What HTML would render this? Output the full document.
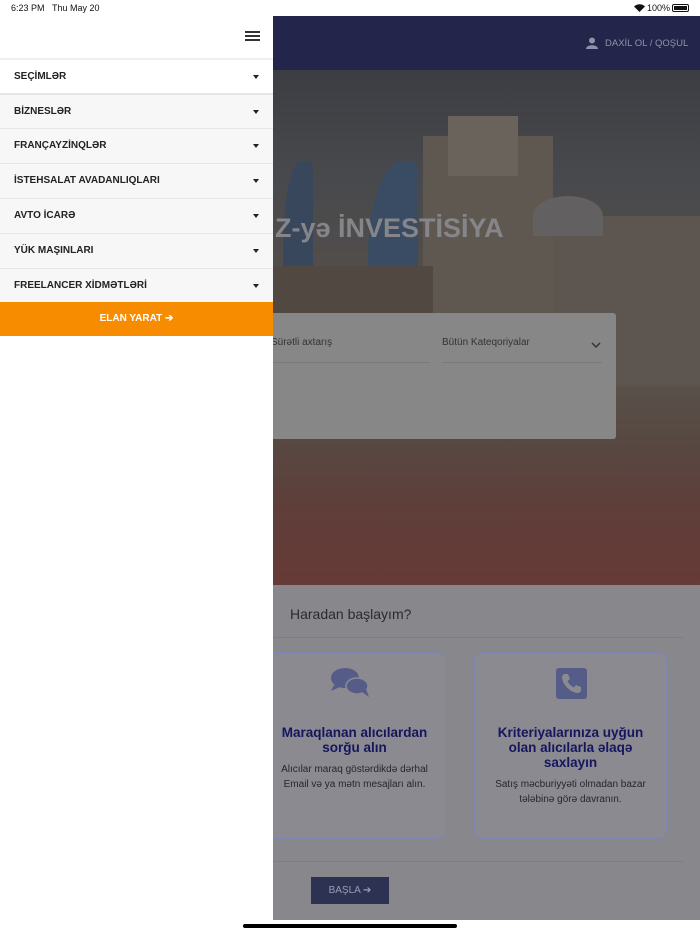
<!DOCTYPE html>
<html><head><meta charset="utf-8"><style>
*{margin:0;padding:0;box-sizing:border-box}
body{width:700px;height:934px;overflow:hidden;background:#fff;font-family:"Liberation Sans",Arial,sans-serif;position:relative}
.abs{position:absolute}
.status{left:0;top:0;width:700px;height:16px;background:#fff;font-size:9px;color:#111}
.drawer{left:0;top:16px;width:273px;height:904px;background:#fff}
.row{position:absolute;left:0;width:273px;height:35px;background:#f7f7f7;border-top:1px solid #e6e6e6;font-size:10px;font-weight:bold;color:#222;padding-left:14px;line-height:34px}
.row:after{content:"";position:absolute;right:14px;top:15px;border-left:3.5px solid transparent;border-right:3.5px solid transparent;border-top:4px solid #222}
.main{left:273px;top:16px;width:427px;height:904px;overflow:hidden;background:#87878c}
.card{position:absolute;border:1px solid #7e84b4;border-radius:8px;background:#8a8a90;text-align:center}
.card h3{color:#15165e;font-size:13.5px;line-height:15px;font-weight:bold}
.card p{color:#26262a;font-size:10px;line-height:14.5px}
</style></head><body>
<div class="abs status"><span class="abs" style="left:11px;top:3px">6:23 PM</span><span class="abs" style="left:52px;top:3px">Thu May 20</span>
<span class="abs" style="left:647px;top:3px">100%</span>
<svg class="abs" style="left:634px;top:4px" width="11" height="8" viewBox="0 0 11 8"><path d="M5.5 8 L0 2.5 A8 8 0 0 1 11 2.5 Z" fill="#111"/></svg>
<div class="abs" style="left:672px;top:4px;width:17px;height:8px;border:1px solid #111;border-radius:2px;padding:1px"><div style="width:100%;height:100%;background:#111"></div></div></div>

<div class="abs main">
 <div class="abs" style="left:0;top:0;width:427px;height:54px;background:#23264a"></div>
 <svg class="abs" style="left:313px;top:21px" width="12" height="12" viewBox="0 0 12 12"><circle cx="6" cy="3.5" r="3" fill="#8f93a8"/><path d="M0 12 C0 7 12 7 12 12Z" fill="#8f93a8"/></svg>
 <div class="abs" style="left:332px;top:22px;font-size:9.5px;color:#8f93a8">DAXİL OL / QOŞUL</div>
 <div class="abs" style="left:0;top:54px;width:427px;height:515px;background:linear-gradient(180deg,#3c3d42 0%,#48494d 20%,#544f4a 45%,#5a524a 60%,#574842 72%,#5f3e3a 85%,#663a36 100%)"></div>
 <div class="abs" style="left:150px;top:120px;width:130px;height:250px;background:#5f5850"></div>
 <div class="abs" style="left:175px;top:100px;width:70px;height:60px;background:#6a635b"></div>
 <div class="abs" style="left:280px;top:200px;width:147px;height:170px;background:#5d5650"></div>
 <div class="abs" style="left:10px;top:145px;width:30px;height:150px;background:#39475c;border-radius:60% 10% 0 0"></div>
 <div class="abs" style="left:95px;top:145px;width:50px;height:140px;background:#394c63;border-radius:70% 10% 0 0"></div>
 <div class="abs" style="left:0;top:250px;width:160px;height:100px;background:#514842"></div>
 <div class="abs" style="left:260px;top:180px;width:70px;height:40px;background:#626060;border-radius:50% 50% 0 0"></div>
 <div class="abs" style="left:2px;top:197px;font-size:27px;font-weight:bold;color:#85858a">Z-yə İNVESTİSİYA</div>
 <div class="abs" style="left:0;top:297px;width:343px;height:126px;background:#878788;border-radius:0 3px 3px 0"></div>
 <div class="abs" style="left:-2px;top:321px;font-size:10px;color:#333">Sürətli axtarış</div>
 <div class="abs" style="left:0;top:346px;width:157px;height:1px;background:#7a7a7a"></div>
 <div class="abs" style="left:169px;top:321px;font-size:10px;color:#333">Bütün Kateqoriyalar</div>
 <div class="abs" style="left:169px;top:346px;width:160px;height:1px;background:#7a7a7a"></div>
 <svg class="abs" style="left:318px;top:326px" width="10" height="7" viewBox="0 0 10 7"><path d="M1 1 L5 5 L9 1" fill="none" stroke="#333" stroke-width="1.5"/></svg>
 <div class="abs" style="left:17px;top:590px;font-size:14px;color:#2b2b2e">Haradan başlayım?</div>
 <div class="abs" style="left:0;top:621px;width:410px;height:1px;background:#7d7d82"></div>
 <div class="card" style="left:-10px;top:636px;width:183px;height:187px">
  <svg style="position:absolute;left:66px;top:14px" width="40" height="32" viewBox="0 0 40 32"><ellipse cx="15" cy="11" rx="14" ry="10" fill="#565c88"/><path d="M4 18 L1 24 L10 20Z" fill="#565c88"/><ellipse cx="27" cy="19" rx="11" ry="8" fill="#565c88" stroke="#8a8a90" stroke-width="1.5"/><path d="M32 25 L39 30 L36 22Z" fill="#565c88"/></svg>
  <h3 style="position:absolute;left:0;right:0;top:72px">Maraqlanan alıcılardan<br>sorğu alın</h3>
  <p style="position:absolute;left:0;right:0;top:110px">Alıcılar maraq göstərdikdə dərhal<br>Email və ya mətn mesajları alın.</p>
 </div>
 <div class="card" style="left:201px;top:636px;width:193px;height:187px">
  <svg style="position:absolute;left:81px;top:15px" width="31" height="31" viewBox="0 0 31 31"><rect width="31" height="31" rx="3" fill="#565c88"/><path d="M9 6 L12 6 L14 11 L11.5 13 C13 16 15 18 18 19.5 L20 17 L25 19 L25 22 C25 24 23 25 21 25 C14 24 7 17 6 10 C6 8 7 6 9 6Z" fill="#8a8a90"/></svg>
  <h3 style="position:absolute;left:0;right:0;top:72px">Kriteriyalarınıza uyğun<br>olan alıcılarla əlaqə<br>saxlayın</h3>
  <p style="position:absolute;left:0;right:0;top:125px">Satış məcburiyyəti olmadan bazar<br>tələbinə görə davranın.</p>
 </div>
 <div class="abs" style="left:0;top:845px;width:410px;height:1px;background:#7d7d82"></div>
 <div class="abs" style="left:38px;top:861px;width:78px;height:27px;background:#2d3152;color:#9a9db5;font-size:10px;text-align:center;line-height:27px">BAŞLA ➔</div>
</div>

<div class="abs drawer">
 <div class="abs" style="left:245px;top:15px;width:15px;height:2px;background:#333;box-shadow:0 4px 0 #333,0 8px 0 #333"></div>
 <div class="row" style="top:42px;background:#fff;border-top:2px solid #f0f0f0">SEÇİMLƏR</div>
 <div class="row" style="top:77px;border-top:2px solid #e6e6e6">BİZNESLƏR</div>
 <div class="row" style="top:112px">FRANÇAYZİNQLƏR</div>
 <div class="row" style="top:147px">İSTEHSALAT AVADANLIQLARI</div>
 <div class="row" style="top:182px">AVTO İCARƏ</div>
 <div class="row" style="top:217px">YÜK MAŞINLARI</div>
 <div class="row" style="top:252px">FREELANCER XİDMƏTLƏRİ</div>
 <div class="abs" style="left:0;top:286px;width:273px;height:34px;background:#f78c00;color:#fff;font-size:10px;font-weight:bold;text-align:center;line-height:34px">ELAN YARAT ➔</div>
</div>
<div class="abs" style="left:243px;top:924px;width:214px;height:4px;border-radius:2px;background:#000"></div>
</body></html>
